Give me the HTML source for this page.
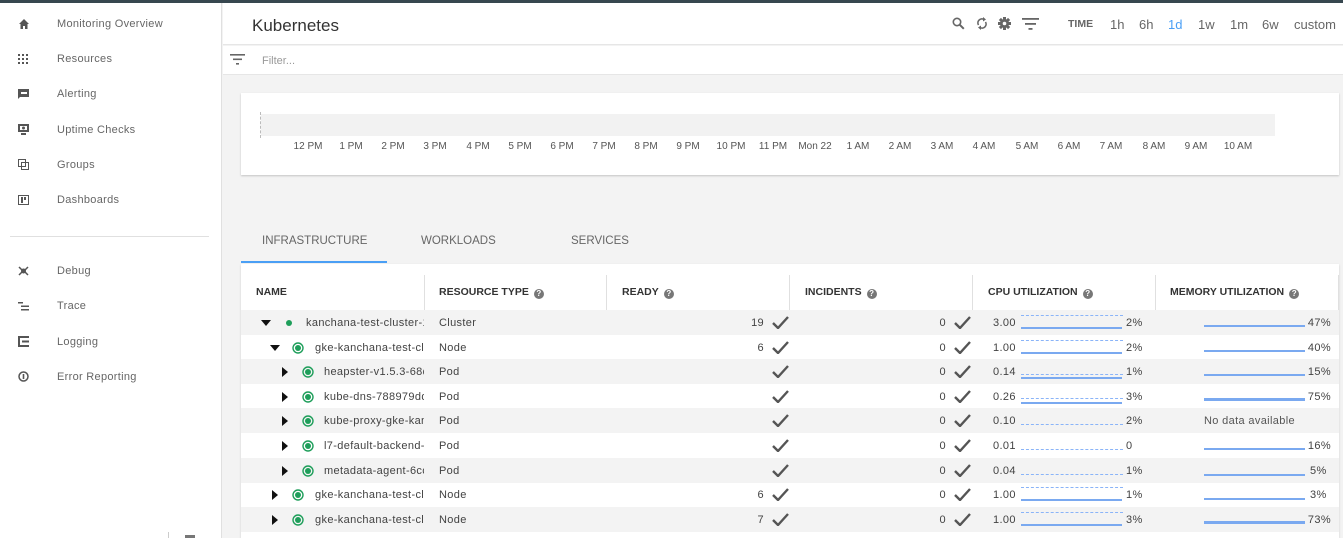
<!DOCTYPE html>
<html><head><meta charset="utf-8"><style>
*{box-sizing:border-box;margin:0;padding:0}
body{width:1343px;height:538px;overflow:hidden;background:#f3f3f3;font-family:"Liberation Sans",Arial,sans-serif;position:relative;color:#424242}
.a{position:absolute;white-space:nowrap}
.nav{font-size:11px;color:#666;letter-spacing:.3px}
.hd{font-size:10.5px;font-weight:bold;color:#333;top:286px}
.q{display:inline-block;width:10px;height:10px;border-radius:50%;background:#777;color:#fff;font-size:8px;text-align:center;line-height:10px;margin-left:5px;vertical-align:-1px}
.row{position:absolute;left:241px;width:1098px;height:25px;font-size:11px;color:#424242;letter-spacing:.35px}
.row .a{top:7px}
.g{background:#f3f3f3}
.tl{font-size:10px;color:#555;top:141px;transform:translateX(-50%)}
.dl{border-top:1px dashed #8ab4f8 !important}
</style></head><body>
<div class="a" style="left:0;top:0;width:1343px;height:3px;background:#37474f"></div>
<div class="a" style="left:0;top:3px;width:222px;height:535px;background:#fff;border-right:1px solid #e0e0e0"></div>
<svg class="a" style="left:18px;top:18px" width="12" height="12" viewBox="0 0 12 12"><path d="M6 1L1 6h1.5v5h2.5V8h2v3h2.5V6H11z" fill="#555"/></svg>
<svg class="a" style="left:18px;top:54px" width="10" height="10"><g fill="#555"><rect x="0" y="0" width="2" height="2"/><rect x="4" y="0" width="2" height="2"/><rect x="8" y="0" width="2" height="2"/><rect x="0" y="4" width="2" height="2"/><rect x="4" y="4" width="2" height="2"/><rect x="8" y="4" width="2" height="2"/><rect x="0" y="8" width="2" height="2"/><rect x="4" y="8" width="2" height="2"/><rect x="8" y="8" width="2" height="2"/></g></svg>
<svg class="a" style="left:18px;top:89px" width="11" height="10"><path d="M0 0h11v8H2l-2 2z" fill="#555"/><rect x="3" y="3" width="6" height="2" fill="#fff"/></svg>
<svg class="a" style="left:18px;top:124px" width="11" height="11"><rect x="0" y="0" width="11" height="8" fill="#555"/><rect x="2" y="2" width="7" height="4" fill="#fff"/><circle cx="5.5" cy="4" r="1.5" fill="#555"/><rect x="3" y="9" width="5" height="2" fill="#555"/></svg>
<svg class="a" style="left:18px;top:159px" width="11" height="11"><rect x="0.5" y="0.5" width="7" height="7" fill="none" stroke="#555"/><rect x="3.5" y="3.5" width="7" height="7" fill="none" stroke="#555"/></svg>
<svg class="a" style="left:18px;top:195px" width="11" height="10"><rect x="0.5" y="0.5" width="10" height="9" fill="none" stroke="#555"/><rect x="3" y="2" width="2" height="6" fill="#555"/><rect x="6" y="2" width="2" height="3" fill="#555"/></svg>
<div class="a nav" style="left:57px;top:18px">Monitoring Overview</div>
<div class="a nav" style="left:57px;top:53px">Resources</div>
<div class="a nav" style="left:57px;top:88px">Alerting</div>
<div class="a nav" style="left:57px;top:124px">Uptime Checks</div>
<div class="a nav" style="left:57px;top:159px">Groups</div>
<div class="a nav" style="left:57px;top:194px">Dashboards</div>
<div class="a" style="left:10px;top:236px;width:199px;height:1px;background:#e0e0e0"></div>
<svg class="a" style="left:18px;top:266px" width="11" height="10"><path d="M1 1l3 3M10 1L7 4M1 9l3-3M10 9L7 6" stroke="#555" stroke-width="1.5"/><circle cx="5.5" cy="5" r="2.5" fill="#555"/></svg>
<svg class="a" style="left:18px;top:301px" width="11" height="10"><rect x="0" y="1" width="5" height="1.5" fill="#555"/><rect x="3" y="4.5" width="8" height="1.5" fill="#555"/><rect x="3" y="8" width="8" height="1.5" fill="#555"/></svg>
<svg class="a" style="left:18px;top:336px" width="11" height="11"><rect x="0" y="0" width="2" height="11" fill="#555"/><rect x="2" y="0" width="9" height="2" fill="#555"/><rect x="4" y="4.5" width="7" height="2" fill="#555"/><rect x="2" y="9" width="9" height="2" fill="#555"/></svg>
<svg class="a" style="left:18px;top:371px" width="11" height="11"><circle cx="5.5" cy="5.5" r="4.5" fill="none" stroke="#555" stroke-width="1.5"/><rect x="4.7" y="3" width="1.6" height="5" fill="#555"/></svg>
<div class="a nav" style="left:57px;top:265px">Debug</div>
<div class="a nav" style="left:57px;top:300px">Trace</div>
<div class="a nav" style="left:57px;top:336px">Logging</div>
<div class="a nav" style="left:57px;top:371px">Error Reporting</div>
<div class="a" style="left:168px;top:532px;width:1px;height:6px;background:#ccc"></div>
<div class="a" style="left:185px;top:535px;width:10px;height:3px;background:#777"></div>
<div class="a" style="left:223px;top:3px;width:1120px;height:42px;background:#fff;border-bottom:1px solid #e6e6e6"></div>
<div class="a" style="left:252px;top:16px;font-size:17px;color:#333">Kubernetes</div>
<svg class="a" style="left:952px;top:17px" width="13" height="13"><circle cx="5" cy="5" r="3.7" fill="none" stroke="#666" stroke-width="1.6"/><path d="M7.8 7.8l4 4" stroke="#666" stroke-width="2"/></svg>
<svg class="a" style="left:976px;top:16px" width="12" height="15" viewBox="0 0 12 15"><path d="M2.5 9A4 4 0 0 1 8 3.5M9.5 6A4 4 0 0 1 4 11.5" fill="none" stroke="#666" stroke-width="1.6"/><path d="M7 1l3 2.5-3 2z M5 9.5l-3 2 3 2.5z" fill="#666"/></svg>
<svg class="a" style="left:998px;top:17px" width="13" height="13" viewBox="0 0 13 13"><g fill="#666"><circle cx="6.5" cy="6.5" r="4.5"/><rect x="5" y="0" width="3" height="13"/><rect x="0" y="5" width="13" height="3"/><rect x="5" y="0" width="3" height="13" transform="rotate(45 6.5 6.5)"/><rect x="5" y="0" width="3" height="13" transform="rotate(-45 6.5 6.5)"/></g><circle cx="6.5" cy="6.5" r="1.8" fill="#fff"/></svg>
<svg class="a" style="left:1022px;top:17px" width="17" height="13"><rect x="0" y="1" width="17" height="1.8" fill="#666"/><rect x="3" y="6" width="11" height="1.8" fill="#666"/><rect x="6.5" y="11" width="4" height="1.8" fill="#666"/></svg>
<div class="a" style="left:1068px;top:18px;font-size:10.5px;font-weight:bold;color:#666">TIME</div>
<div class="a" style="left:1110px;top:17px;font-size:13px;color:#666">1h</div>
<div class="a" style="left:1139px;top:17px;font-size:13px;color:#666">6h</div>
<div class="a" style="left:1168px;top:17px;font-size:13px;color:#4a9ff5">1d</div>
<div class="a" style="left:1198px;top:17px;font-size:13px;color:#666">1w</div>
<div class="a" style="left:1230px;top:17px;font-size:13px;color:#666">1m</div>
<div class="a" style="left:1262px;top:17px;font-size:13px;color:#666">6w</div>
<div class="a" style="left:1294px;top:17px;font-size:13px;color:#666">custom</div>
<div class="a" style="left:223px;top:46px;width:1120px;height:29px;background:#fff;border-bottom:1px solid #e6e6e6"></div>
<svg class="a" style="left:230px;top:54px" width="15" height="12"><rect x="0" y="0" width="15" height="1.6" fill="#666"/><rect x="3" y="4.5" width="9" height="1.6" fill="#666"/><rect x="6" y="9" width="3" height="1.6" fill="#666"/></svg>
<div class="a" style="left:262px;top:55px;font-size:11px;color:#999">Filter...</div>
<div class="a" style="left:241px;top:93px;width:1098px;height:82px;background:#fff;box-shadow:0 1px 2px rgba(0,0,0,.2)"></div>
<div class="a" style="left:261px;top:114px;width:1014px;height:22px;background:#f2f2f2"></div>
<div class="a" style="left:260px;top:112px;height:26px;border-left:1px dashed #bbb"></div>
<div class="a tl" style="left:308px">12 PM</div><div class="a tl" style="left:351px">1 PM</div><div class="a tl" style="left:393px">2 PM</div><div class="a tl" style="left:435px">3 PM</div><div class="a tl" style="left:478px">4 PM</div><div class="a tl" style="left:520px">5 PM</div><div class="a tl" style="left:562px">6 PM</div><div class="a tl" style="left:604px">7 PM</div><div class="a tl" style="left:646px">8 PM</div><div class="a tl" style="left:688px">9 PM</div><div class="a tl" style="left:731px">10 PM</div><div class="a tl" style="left:773px">11 PM</div><div class="a tl" style="left:815px">Mon 22</div><div class="a tl" style="left:858px">1 AM</div><div class="a tl" style="left:900px">2 AM</div><div class="a tl" style="left:942px">3 AM</div><div class="a tl" style="left:984px">4 AM</div><div class="a tl" style="left:1027px">5 AM</div><div class="a tl" style="left:1069px">6 AM</div><div class="a tl" style="left:1111px">7 AM</div><div class="a tl" style="left:1154px">8 AM</div><div class="a tl" style="left:1196px">9 AM</div><div class="a tl" style="left:1238px">10 AM</div>
<div class="a" style="left:262px;top:235px;font-size:11.5px;color:#666">INFRASTRUCTURE</div>
<div class="a" style="left:421px;top:235px;font-size:11.5px;color:#666">WORKLOADS</div>
<div class="a" style="left:571px;top:235px;font-size:11.5px;color:#666">SERVICES</div>
<div class="a" style="left:241px;top:261px;width:146px;height:2px;background:#4a9ff5"></div>
<div class="a" style="left:241px;top:264px;width:1098px;height:274px;background:#fff;box-shadow:0 1px 2px rgba(0,0,0,.15)"></div>
<div class="a" style="left:424px;top:275px;width:1px;height:35px;background:#e0e0e0"></div>
<div class="a" style="left:606px;top:275px;width:1px;height:35px;background:#e0e0e0"></div>
<div class="a" style="left:789px;top:275px;width:1px;height:35px;background:#e0e0e0"></div>
<div class="a" style="left:972px;top:275px;width:1px;height:35px;background:#e0e0e0"></div>
<div class="a" style="left:1155px;top:275px;width:1px;height:35px;background:#e0e0e0"></div>
<div class="a" style="left:1338px;top:275px;width:1px;height:35px;background:#e0e0e0"></div>
<div class="a hd" style="left:256px">NAME</div>
<div class="a hd" style="left:439px">RESOURCE TYPE<span class="q">?</span></div>
<div class="a hd" style="left:622px">READY<span class="q">?</span></div>
<div class="a hd" style="left:805px">INCIDENTS<span class="q">?</span></div>
<div class="a hd" style="left:988px">CPU UTILIZATION<span class="q">?</span></div>
<div class="a hd" style="left:1170px">MEMORY UTILIZATION<span class="q">?</span></div>

<svg width="0" height="0" style="position:absolute"><defs>
<symbol id="ck" viewBox="0 0 17 13"><path d="M1 7l5 5L16 1" fill="none" stroke="#555" stroke-width="2.4"/></symbol>
<symbol id="dn" viewBox="0 0 10 10"><path d="M0 2h10L5 8z" fill="#111"/></symbol>
<symbol id="rt" viewBox="0 0 10 10"><path d="M2 0v10l6-5z" fill="#111"/></symbol>
<symbol id="dt" viewBox="0 0 12 12"><circle cx="6" cy="6" r="5" fill="none" stroke="#1e9e5a" stroke-width="1.4"/><circle cx="6" cy="6" r="3" fill="#1e9e5a"/></symbol>
</defs></svg>

<div class="row g" style="top:310px"><svg class="a" style="left:20px;top:8px" width="10" height="10"><use href="#dn"/></svg><div class="a" style="left:45px;top:10px;width:6px;height:6px;border-radius:50%;background:#1e9e5a"></div><div class="a" style="left:65px;width:118px;overflow:hidden">kanchana-test-cluster-1</div><div class="a" style="left:198px">Cluster</div><div class="a" style="left:493px;width:30px;text-align:right">19</div><svg class="a" style="left:531px;top:6px" width="17" height="13"><use href="#ck"/></svg><div class="a" style="left:685px;width:20px;text-align:right">0</div><svg class="a" style="left:713px;top:6px" width="17" height="13"><use href="#ck"/></svg><div class="a" style="left:752px">3.00</div><div class="a dl" style="left:780px;top:5px;width:102px"></div><div class="a" style="left:780px;top:17px;width:101px;height:1.5px;background:#7aa9f0"></div><div class="a" style="left:885px">2%</div><div class="a" style="left:963px;top:15px;width:101px;height:2px;background:#7aa9f0"></div><div class="a" style="left:1060px;width:30px;text-align:right">47%</div></div>

<div class="row" style="top:335px"><svg class="a" style="left:29px;top:8px" width="10" height="10"><use href="#dn"/></svg><svg class="a" style="left:51px;top:7px" width="12" height="12"><use href="#dt"/></svg><div class="a" style="left:74px;width:108px;overflow:hidden">gke-kanchana-test-cluster</div><div class="a" style="left:198px">Node</div><div class="a" style="left:493px;width:30px;text-align:right">6</div><svg class="a" style="left:531px;top:6px" width="17" height="13"><use href="#ck"/></svg><div class="a" style="left:685px;width:20px;text-align:right">0</div><svg class="a" style="left:713px;top:6px" width="17" height="13"><use href="#ck"/></svg><div class="a" style="left:752px">1.00</div><div class="a dl" style="left:780px;top:5px;width:102px"></div><div class="a" style="left:780px;top:17px;width:101px;height:1.5px;background:#7aa9f0"></div><div class="a" style="left:885px">2%</div><div class="a" style="left:963px;top:15px;width:101px;height:2px;background:#7aa9f0"></div><div class="a" style="left:1060px;width:30px;text-align:right">40%</div></div>

<div class="row g" style="top:359px"><svg class="a" style="left:39px;top:8px" width="10" height="10"><use href="#rt"/></svg><svg class="a" style="left:61px;top:7px" width="12" height="12"><use href="#dt"/></svg><div class="a" style="left:83px;width:100px;overflow:hidden">heapster-v1.5.3-68d</div><div class="a" style="left:198px">Pod</div><svg class="a" style="left:531px;top:6px" width="17" height="13"><use href="#ck"/></svg><div class="a" style="left:685px;width:20px;text-align:right">0</div><svg class="a" style="left:713px;top:6px" width="17" height="13"><use href="#ck"/></svg><div class="a" style="left:752px">0.14</div><div class="a dl" style="left:780px;top:15px;width:102px"></div><div class="a" style="left:780px;top:18px;width:101px;height:1.5px;background:#7aa9f0"></div><div class="a" style="left:885px">1%</div><div class="a" style="left:963px;top:15px;width:101px;height:2px;background:#7aa9f0"></div><div class="a" style="left:1060px;width:30px;text-align:right">15%</div></div>

<div class="row" style="top:384px"><svg class="a" style="left:39px;top:8px" width="10" height="10"><use href="#rt"/></svg><svg class="a" style="left:61px;top:7px" width="12" height="12"><use href="#dt"/></svg><div class="a" style="left:83px;width:100px;overflow:hidden">kube-dns-788979dd</div><div class="a" style="left:198px">Pod</div><svg class="a" style="left:531px;top:6px" width="17" height="13"><use href="#ck"/></svg><div class="a" style="left:685px;width:20px;text-align:right">0</div><svg class="a" style="left:713px;top:6px" width="17" height="13"><use href="#ck"/></svg><div class="a" style="left:752px">0.26</div><div class="a dl" style="left:780px;top:14px;width:102px"></div><div class="a" style="left:780px;top:18px;width:101px;height:1.5px;background:#7aa9f0"></div><div class="a" style="left:885px">3%</div><div class="a" style="left:963px;top:14px;width:101px;height:3px;background:#7aa9f0"></div><div class="a" style="left:1060px;width:30px;text-align:right">75%</div></div>

<div class="row g" style="top:408px"><svg class="a" style="left:39px;top:8px" width="10" height="10"><use href="#rt"/></svg><svg class="a" style="left:61px;top:7px" width="12" height="12"><use href="#dt"/></svg><div class="a" style="left:83px;width:100px;overflow:hidden">kube-proxy-gke-kanc</div><div class="a" style="left:198px">Pod</div><svg class="a" style="left:531px;top:6px" width="17" height="13"><use href="#ck"/></svg><div class="a" style="left:685px;width:20px;text-align:right">0</div><svg class="a" style="left:713px;top:6px" width="17" height="13"><use href="#ck"/></svg><div class="a" style="left:752px">0.10</div><div class="a dl" style="left:780px;top:16px;width:102px"></div><div class="a" style="left:885px">2%</div><div class="a" style="left:963px;color:#555">No data available</div></div>

<div class="row" style="top:433px"><svg class="a" style="left:39px;top:8px" width="10" height="10"><use href="#rt"/></svg><svg class="a" style="left:61px;top:7px" width="12" height="12"><use href="#dt"/></svg><div class="a" style="left:83px;width:100px;overflow:hidden">l7-default-backend-6</div><div class="a" style="left:198px">Pod</div><svg class="a" style="left:531px;top:6px" width="17" height="13"><use href="#ck"/></svg><div class="a" style="left:685px;width:20px;text-align:right">0</div><svg class="a" style="left:713px;top:6px" width="17" height="13"><use href="#ck"/></svg><div class="a" style="left:752px">0.01</div><div class="a dl" style="left:780px;top:16px;width:102px"></div><div class="a" style="left:885px">0</div><div class="a" style="left:963px;top:15px;width:101px;height:2px;background:#7aa9f0"></div><div class="a" style="left:1060px;width:30px;text-align:right">16%</div></div>

<div class="row g" style="top:458px"><svg class="a" style="left:39px;top:8px" width="10" height="10"><use href="#rt"/></svg><svg class="a" style="left:61px;top:7px" width="12" height="12"><use href="#dt"/></svg><div class="a" style="left:83px;width:100px;overflow:hidden">metadata-agent-6cc</div><div class="a" style="left:198px">Pod</div><svg class="a" style="left:531px;top:6px" width="17" height="13"><use href="#ck"/></svg><div class="a" style="left:685px;width:20px;text-align:right">0</div><svg class="a" style="left:713px;top:6px" width="17" height="13"><use href="#ck"/></svg><div class="a" style="left:752px">0.04</div><div class="a dl" style="left:780px;top:16px;width:102px"></div><div class="a" style="left:885px">1%</div><div class="a" style="left:963px;top:16px;width:101px;height:1.5px;background:#7aa9f0"></div><div class="a" style="left:1069px">5%</div></div>

<div class="row" style="top:482px"><svg class="a" style="left:29px;top:8px" width="10" height="10"><use href="#rt"/></svg><svg class="a" style="left:51px;top:7px" width="12" height="12"><use href="#dt"/></svg><div class="a" style="left:74px;width:108px;overflow:hidden">gke-kanchana-test-cluster</div><div class="a" style="left:198px">Node</div><div class="a" style="left:493px;width:30px;text-align:right">6</div><svg class="a" style="left:531px;top:6px" width="17" height="13"><use href="#ck"/></svg><div class="a" style="left:685px;width:20px;text-align:right">0</div><svg class="a" style="left:713px;top:6px" width="17" height="13"><use href="#ck"/></svg><div class="a" style="left:752px">1.00</div><div class="a dl" style="left:780px;top:5px;width:102px"></div><div class="a" style="left:780px;top:17px;width:101px;height:1.5px;background:#7aa9f0"></div><div class="a" style="left:885px">1%</div><div class="a" style="left:963px;top:16px;width:101px;height:1.5px;background:#7aa9f0"></div><div class="a" style="left:1069px">3%</div></div>

<div class="row g" style="top:507px"><svg class="a" style="left:29px;top:8px" width="10" height="10"><use href="#rt"/></svg><svg class="a" style="left:51px;top:7px" width="12" height="12"><use href="#dt"/></svg><div class="a" style="left:74px;width:108px;overflow:hidden">gke-kanchana-test-cluster</div><div class="a" style="left:198px">Node</div><div class="a" style="left:493px;width:30px;text-align:right">7</div><svg class="a" style="left:531px;top:6px" width="17" height="13"><use href="#ck"/></svg><div class="a" style="left:685px;width:20px;text-align:right">0</div><svg class="a" style="left:713px;top:6px" width="17" height="13"><use href="#ck"/></svg><div class="a" style="left:752px">1.00</div><div class="a dl" style="left:780px;top:5px;width:102px"></div><div class="a" style="left:780px;top:17px;width:101px;height:1.5px;background:#7aa9f0"></div><div class="a" style="left:885px">3%</div><div class="a" style="left:963px;top:14px;width:101px;height:3px;background:#7aa9f0"></div><div class="a" style="left:1060px;width:30px;text-align:right">73%</div></div>
</body></html>
